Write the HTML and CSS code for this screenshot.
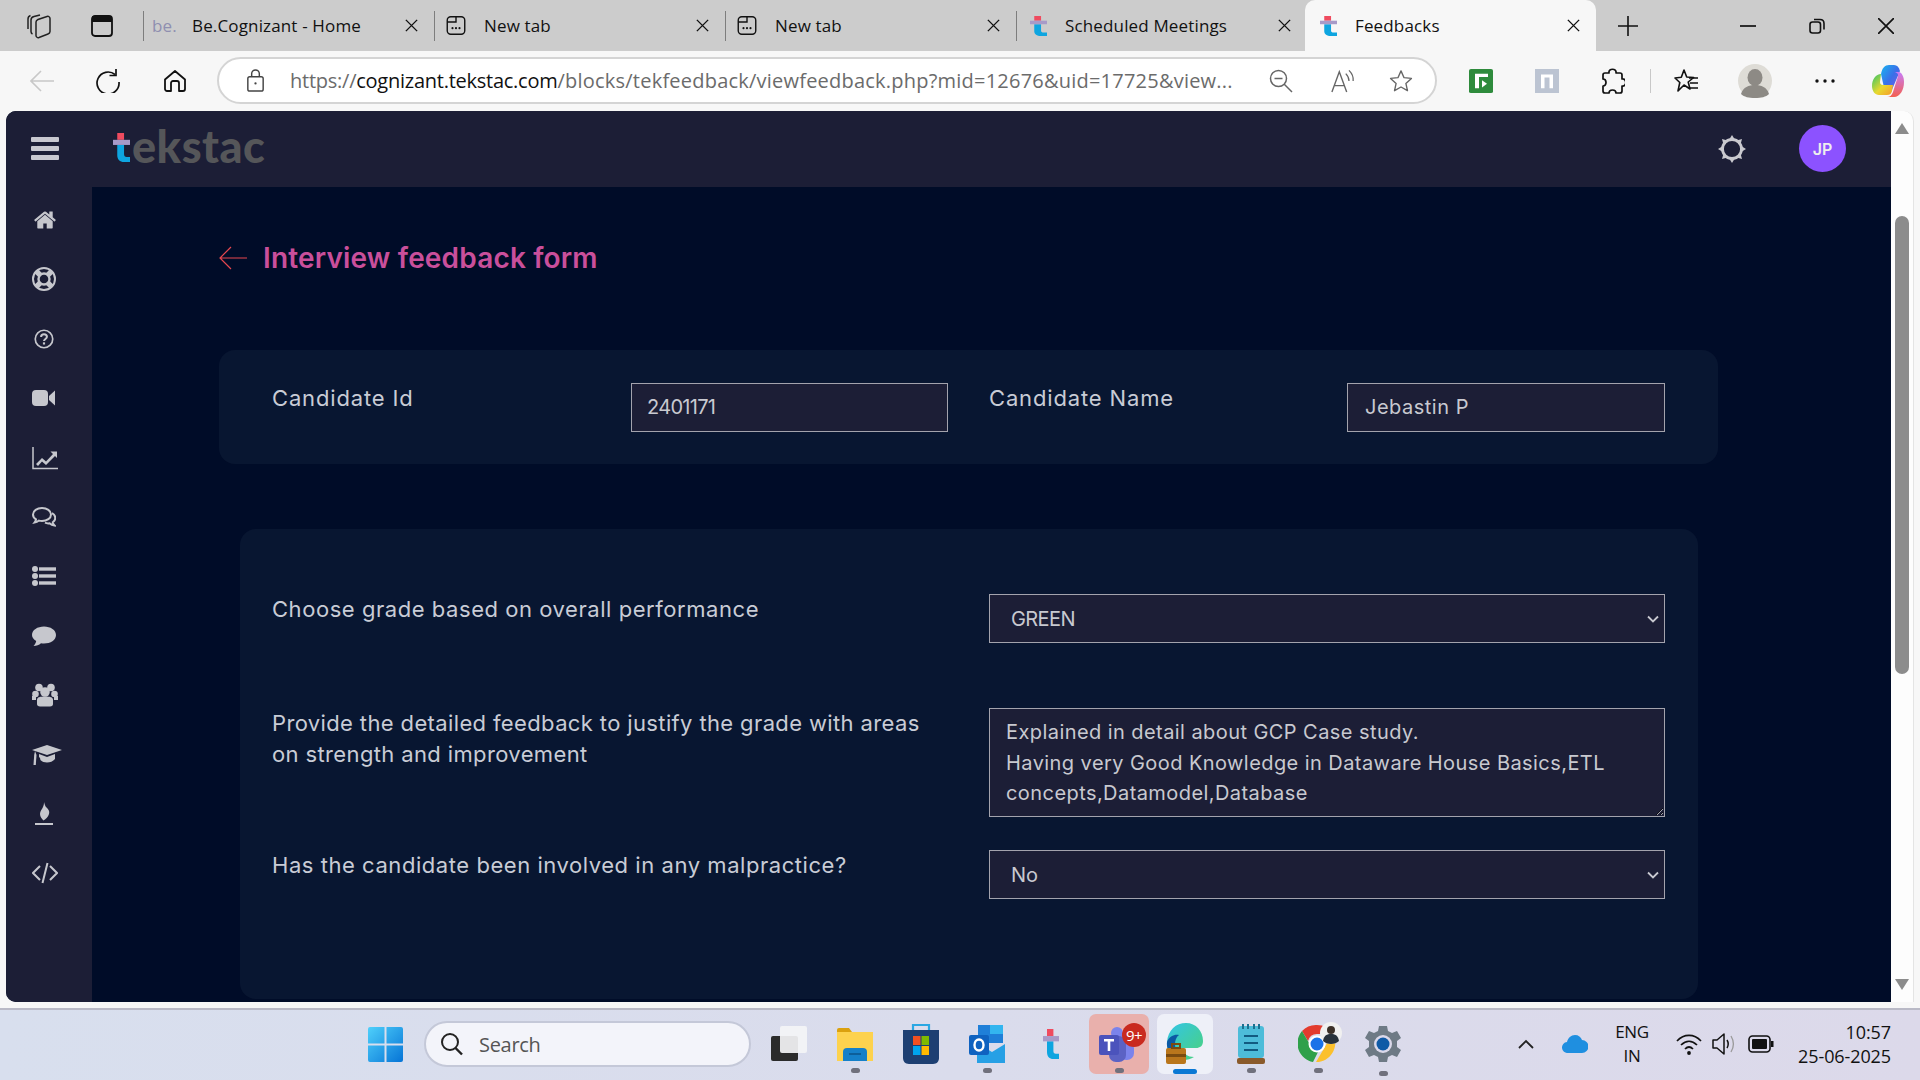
FILE: index.html
```html
<!DOCTYPE html>
<html lang="en">
<head>
<meta charset="utf-8">
<title>Feedbacks</title>
<link rel="stylesheet" href="styles.css">
</head>
<body>
<svg class="defs" width="0" height="0" aria-hidden="true">
  <symbol id="t-mark" viewBox="0 0 20 34" preserveAspectRatio="none">
    <rect x="5" y="0" width="8" height="8" fill="#ef4b5f"/>
    <path d="M5 14h8v11c0 2 1 3 3 3h4v6h-7c-5 0-8-3-8-8z" fill="#0ea5e0"/>
    <rect x="0" y="8" width="20" height="6" fill="#a89ac8"/>
  </symbol>
  <symbol id="newtab" viewBox="0 0 24 24">
    <rect x="2" y="2" width="20" height="20" rx="4" fill="none" stroke="#111" stroke-width="1.6"/>
    <path d="M2 8h10V2" fill="none" stroke="#111" stroke-width="1.6"/>
    <circle cx="8" cy="15" r="1.2" fill="#111"/><circle cx="12" cy="15" r="1.2" fill="#111"/><circle cx="16" cy="15" r="1.2" fill="#111"/>
  </symbol>
  <symbol id="x" viewBox="0 0 16 16">
    <path d="M2 2l12 12M14 2L2 14" stroke="#111" stroke-width="1.5" fill="none"/>
  </symbol>
</svg>

<div class="tabstrip">
  <svg class="strip-ic collections" viewBox="0 0 26 26"><path d="M10 9c0-1 1-2 2-2.500l9-3c1.500-.5 3 .5 3 2v13c0 1-.5 2-2 2.500l-9 3.500c-1.500.5-3-.5-3-2z" fill="none" stroke="#222" stroke-width="1.500"/><path d="M6.500 21c-1-.5-1.500-1.500-1.500-2.500V7c0-2 1-3 3-3.500L14 2M2 16V6c0-2 1-3 2.500-3.500" fill="none" stroke="#222" stroke-width="1.500"/></svg>
  <svg class="strip-ic sidebar-ic" viewBox="0 0 24 24"><rect x="2" y="2" width="20" height="20" rx="3" fill="none" stroke="#111" stroke-width="1.8"/><path d="M2 2h20v6H2z" fill="#111"/></svg>
  <div class="tab first"><span class="be">be.</span><span class="tab-title">Be.Cognizant - Home</span><svg class="tab-x"><use href="#x"/></svg></div>
  <div class="tab"><svg class="fav"><use href="#newtab"/></svg><span class="tab-title">New tab</span><svg class="tab-x"><use href="#x"/></svg></div>
  <div class="tab"><svg class="fav"><use href="#newtab"/></svg><span class="tab-title">New tab</span><svg class="tab-x"><use href="#x"/></svg></div>
  <div class="tab"><svg class="fav tek-fav"><use href="#t-mark"/></svg><span class="tab-title">Scheduled Meetings</span><svg class="tab-x"><use href="#x"/></svg></div>
  <div class="tab active"><svg class="fav tek-fav"><use href="#t-mark"/></svg><span class="tab-title">Feedbacks</span><svg class="tab-x"><use href="#x"/></svg></div>
  <svg class="plus" viewBox="0 0 20 20"><path d="M10 0v20M0 10h20" stroke="#111" stroke-width="1.6"/></svg>
  <svg class="win min" viewBox="0 0 16 16"><path d="M0 8h16" stroke="#111" stroke-width="1.7"/></svg>
  <svg class="win restore" viewBox="0 0 16 16"><rect x="1" y="4" width="10.5" height="11" rx="2.5" fill="none" stroke="#111" stroke-width="1.6"/><path d="M5 1.5h6c2.500 0 4 1.500 4 4v6" fill="none" stroke="#111" stroke-width="1.6"/></svg>
  <svg class="win close" viewBox="0 0 16 16"><path d="M0 0l16 16M16 0L0 16" stroke="#111" stroke-width="1.7"/></svg>
</div>

<div class="toolbar">
  <svg class="tool back" viewBox="0 0 24 24"><path d="M24 12H1M11 2L1 12l10 10" fill="none" stroke="#c8c8c8" stroke-width="1.6"/></svg>
  <svg class="tool reload" viewBox="0 0 24 24"><path d="M19 5.500A11 11 0 1 0 23 13" fill="none" stroke="#111" stroke-width="1.7"/><path d="M20 0v6.500h-6.500" fill="none" stroke="#111" stroke-width="1.7"/></svg>
  <svg class="tool home" viewBox="0 0 24 24"><path d="M2 10.500L12 2l10 8.500V20a2 2 0 0 1-2 2h-4v-8a2 2 0 0 0-2-2h-4a2 2 0 0 0-2 2v8H4a2 2 0 0 1-2-2z" fill="none" stroke="#111" stroke-width="1.8" stroke-linejoin="round"/></svg>
  <div class="addressbar">
    <svg class="lock" viewBox="0 0 18 24"><rect x="1" y="8" width="16" height="15" rx="2" fill="none" stroke="#444" stroke-width="1.5"/><path d="M5 8V5a4 4 0 0 1 8 0v3" fill="none" stroke="#444" stroke-width="1.5"/><circle cx="9" cy="15" r="1.200" fill="#444"/></svg>
    <span class="url"><span class="url-dim">https://</span><span class="url-host">cognizant.tekstac.com</span><span class="url-dim url-path">/blocks/tekfeedback/viewfeedback.php?mid=12676&amp;uid=17725&amp;view...</span></span>
    <svg class="addr-ic zoomout" viewBox="0 0 24 24"><circle cx="9.500" cy="9.500" r="8" fill="none" stroke="#666" stroke-width="1.500"/><path d="M15 15l8 8M5.500 9.500h8" stroke="#666" stroke-width="1.500"/></svg>
    <svg class="addr-ic read" viewBox="0 0 26 26"><path d="M1 25L9 3l8 22M4 18h10" fill="none" stroke="#666" stroke-width="1.500"/><path d="M16 5c2 2 3.500 4.500 3.500 8M19.500 1.500c3 3 5 7 4.500 11.500" fill="none" stroke="#666" stroke-width="1.400"/></svg>
    <svg class="addr-ic star" viewBox="0 0 26 26"><path d="M13 2l3.300 7.400 8 .8-6 5.400 1.700 7.900L13 19.500l-7 4 1.700-7.900-6-5.400 8-.8z" fill="none" stroke="#666" stroke-width="1.500" stroke-linejoin="round"/></svg>
  </div>
  <svg class="ext green" viewBox="0 0 24 30" preserveAspectRatio="none"><rect width="24" height="30" rx="2" fill="#2e8b3c"/><path d="M6 24V6h13v4h-9v14z" fill="#fff"/><path d="M13 14l5 4.500-5 4.500z" fill="#fff"/></svg>
  <svg class="ext nion" viewBox="0 0 24 30" preserveAspectRatio="none"><rect width="24" height="30" fill="#bcc4d2"/><path d="M6 24V7h12v17h-3.500V10.500h-5V24z" fill="#fff"/></svg>
  <svg class="ext puzzle" viewBox="0 0 24 28"><path d="M8 6c-1-5 8-5 7 0h4c1 0 2 1 2 2v4c5-1 5 8 0 7v5c0 1-1 2-2 2h-4c0-4-7-4-7 0H4c-1 0-2-1-2-2v-5c4 0 4-7 0-7V8c0-1 1-2 2-2z" fill="none" stroke="#111" stroke-width="1.700" stroke-linejoin="round"/></svg>
  <span class="tool-sep"></span>
  <svg class="ext favs" viewBox="0 0 24 28"><path d="M10 3l2.700 7 7 .5-5.500 4.500 1.800 7-6-4-6 6 1.800-8.500L1 11l6.300-.7z" fill="none" stroke="#111" stroke-width="1.600" stroke-linejoin="round"/><path d="M15 11h9M16 16h8M15 21h9" stroke="#111" stroke-width="1.600"/></svg>
  <svg class="avatar-ic" viewBox="0 0 34 34"><circle cx="17" cy="17" r="17" fill="#dedcd6"/><ellipse cx="17" cy="13.500" rx="7.500" ry="8.500" fill="#8d8a85"/><path d="M3 30c2-7 8-9 14-9s12 2 14 9c-3 3-8 4-14 4s-11-1-14-4z" fill="#8d8a85"/></svg>
  <svg class="dots" viewBox="0 0 20 4"><circle cx="2" cy="2" r="1.700" fill="#111"/><circle cx="10" cy="2" r="1.700" fill="#111"/><circle cx="18" cy="2" r="1.700" fill="#111"/></svg>
  <svg class="copilot" viewBox="0 0 34 34">
    <defs>
      <linearGradient id="cpa" x1="0" y1="0" x2="1" y2="1"><stop offset="0" stop-color="#19b4f0"/><stop offset=".5" stop-color="#3a6fe8"/><stop offset="1" stop-color="#7f5ce8"/></linearGradient>
      <linearGradient id="cpb" x1="0" y1="0" x2="1" y2="1"><stop offset="0" stop-color="#2fc36a"/><stop offset=".55" stop-color="#e8d92f"/><stop offset="1" stop-color="#f59a2b"/></linearGradient>
      <linearGradient id="cpc" x1="0" y1="0" x2="0" y2="1"><stop offset="0" stop-color="#c77dfa"/><stop offset="1" stop-color="#f4604f"/></linearGradient>
    </defs>
    <path d="M10 10c1-6 4-9 8-9h5c3 0 5 2 6 6l-9 21H14z" fill="url(#cpa)"/>
    <path d="M10 10c-5 0-9 5-9 12 0 5 3 9 7 9h8c3 0 4-1 5-4l1-6H12c-2 0-3-1-3-3z" fill="url(#cpb)"/>
    <path d="M22 8h5c4 0 6 5 6 10 0 8-4 15-10 15h-7c3 0 5-2 6-5l5-16c.5-2-1-4-5-4z" fill="url(#cpc)"/>
  </svg>
</div>

<div class="window">
  <div class="app">
    <header class="app-header">
      <div class="burger"><span></span><span></span><span></span></div>
      <div class="logo"><svg class="logo-t"><use href="#t-mark"/></svg><span class="logo-text">ekstac</span></div>
      <svg class="gear" viewBox="0 0 28 28"><circle cx="14" cy="14" r="9.500" fill="none" stroke="#c9c9cf" stroke-width="2.800"/><path d="M14 0l2.500 4h-5zM14 28l-2.500-4h5zM0 14l4-2.500v5zM28 14l-4 2.500v-5zM4 4l4.600 1.200-3.400 3.400zM24 24l-4.600-1.200 3.400-3.400zM24 4l-1.200 4.600-3.400-3.400zM4 24l1.200-4.600 3.400 3.400z" fill="#c9c9cf"/></svg>
      <div class="user">JP</div>
    </header>
    <div class="app-body">
      <nav class="rail">
        <svg class="rail-ic home-ic" viewBox="0 0 1792 1792"><path d="M1472 992v480q0 26-19 45t-45 19h-384v-384h-256v384h-384q-26 0-45-19t-19-45v-480q0-1 .5-3t.5-3l575-474 575 474q1 2 1 6zm223-69l-62 74q-8 9-21 11h-3q-13 0-21-7l-692-577-692 577q-12 8-24 7-13-2-21-11l-62-74q-8-10-7-23.500t11-22.500l719-599q32-26 76-26t76 26l244 204v-195q0-14 9-23t23-9h192q14 0 23 9t9 23v408l219 182q10 8 11 21.500t-7 23.500z"/></svg>
        <svg class="rail-ic" viewBox="0 0 24 24"><circle cx="12" cy="12" r="11" fill="none" stroke-width="2"/><circle cx="12" cy="12" r="5.500" fill="none" stroke-width="2.400"/><path d="M4.200 4.200l4 4M19.800 4.200l-4 4M4.200 19.800l4-4M19.800 19.800l-4-4" fill="none" stroke-width="5.400"/></svg>
        <svg class="rail-ic small" viewBox="0 0 24 24"><circle cx="12" cy="12" r="10.500" fill="none" stroke-width="2"/><path d="M8.500 9.500c0-2 1.500-3.300 3.500-3.300s3.500 1.300 3.500 3c0 2.600-3.500 2.800-3.500 5.300" fill="none" stroke-width="2.400"/><rect x="10.700" y="16" width="2.600" height="2.600" stroke="none"/></svg>
        <svg class="rail-ic" viewBox="0 0 24 24"><rect x="0" y="4" width="16" height="16" rx="4" stroke="none"/><path d="M17 10l6-5.500v15L17 14z" stroke="none"/></svg>
        <svg class="rail-ic wide" viewBox="0 0 26 24"><path d="M1 1v21.500h25" fill="none" stroke-width="1.500"/><path d="M4 18l6-6 4 3.500L21 8l-2.500-2.500H25V12l-2-2-9 9-4-3.500L6 20z" stroke="none"/></svg>
        <svg class="rail-ic" viewBox="0 0 24 24"><path d="M10 3c5 0 9 2.700 9 6.500S15 16 10 16c-1 0-2-.1-3-.4-1.200 1-2.800 1.800-4.500 2 .8-1 1.400-2 1.500-3.200C2 13.200 1 11.500 1 9.500 1 5.700 5 3 10 3z" fill="none" stroke-width="2"/><path d="M20 8c2 1.200 3.300 3 3.300 5 0 1.700-1 3.200-2.500 4.300.1 1.200.8 2.300 1.700 3.200-2-.2-3.700-1-5-2.200-1.500.2-3.300 0-4.500-.6" fill="none" stroke-width="2"/></svg>
        <svg class="rail-ic" viewBox="0 0 24 24"><circle cx="3" cy="5" r="3" stroke="none"/><circle cx="3" cy="12" r="3" stroke="none"/><circle cx="3" cy="19" r="3" stroke="none"/><rect x="7" y="3.300" width="17" height="3.400" stroke="none"/><rect x="7" y="10.300" width="17" height="3.400" stroke="none"/><rect x="7" y="17.300" width="17" height="3.400" stroke="none"/></svg>
        <svg class="rail-ic" viewBox="0 0 24 24"><path d="M12 2.500c6.500 0 12 3.500 12 8.500s-5.500 8.500-12 8.500c-1 0-2-.1-3-.3C7 21 4.500 22 1.500 22c1.300-1.300 2.300-3 2.700-5C1.600 15.500 0 13.400 0 11 0 6 5.500 2.500 12 2.500z" stroke="none"/></svg>
        <svg class="rail-ic wide" viewBox="0 0 26 24"><circle cx="7" cy="4.500" r="3.800" stroke="none"/><circle cx="19" cy="4.500" r="3.800" stroke="none"/><circle cx="3.500" cy="11" r="3.300" stroke="none"/><circle cx="22.500" cy="11" r="3.300" stroke="none"/><circle cx="13" cy="9" r="4.800" stroke="none"/><path d="M5 17c0-3 3-3.500 8-3.500s8 .5 8 3.500v4c0 1.500-1 2.500-3 2.500H8c-2 0-3-1-3-2.500z" stroke="none"/><path d="M0 13h4v4H0zM22 13h4v4h-4z" stroke="none"/></svg>
        <svg class="rail-ic grad" viewBox="0 0 30 20"><path d="M15 0l15 5-15 5L0 5z" stroke="none"/><path d="M7 9l8 3 8-3v5c-2 2.500-5 3.500-8 3.500-2.500 0-5-1-6-2l-.6-.4c0-1.500-.5-2.500-1.400-3z" stroke="none"/><path d="M3 6l1.500 4-.7 10H1.500l.7-10z" stroke="none"/></svg>
        <svg class="rail-ic flame" viewBox="0 0 20 24"><path d="M10 0c1 3 1 4 2.500 5.500C14 7 16 9 15 12c-.8 3-3 5-5.500 6.500C8 17 6 15 6 12c0-3 2-4.500 3-7C9.700 3.500 10 2 10 0z" stroke="none"/><rect x="1" y="21" width="18" height="2" stroke="none"/></svg>
        <svg class="rail-ic wide" viewBox="0 0 26 20"><path d="M8 3L1 10l7 7M18 3l7 7-7 7M15.500 0l-5 20" fill="none" stroke-width="2"/></svg>
      </nav>
      <main class="content">
        <div class="title-row">
          <svg class="title-arrow" viewBox="0 0 28 24"><path d="M28 12H1M12 1L1 12l11 11" fill="none" stroke="#e5474f" stroke-width="1.200"/></svg>
          <h1 class="title">Interview feedback form</h1>
        </div>
        <section class="card candidate">
          <label class="field-label wider">Candidate Id</label>
          <input class="control id-val" type="text" value="2401171">
          <span></span>
          <label class="field-label wider">Candidate Name</label>
          <input class="control name-val" type="text" value="Jebastin P">
        </section>
        <section class="card questions">
          <label class="field-label">Choose grade based on overall performance</label>
          <select class="control pick grade"><option>GREEN</option></select>
          <label class="field-label row-two tighter">Provide the detailed feedback to justify the grade with areas on strength and improvement</label>
          <textarea class="control notes row-two">Explained in detail about GCP Case study.
Having very Good Knowledge in Dataware House Basics,ETL concepts,Datamodel,Database</textarea>
          <label class="field-label row-three">Has the candidate been involved in any malpractice?</label>
          <select class="control pick row-three"><option>No</option></select>
        </section>
      </main>
    </div>
  </div>
  <div class="scrollbar"><span class="arrow up"></span><span class="track"><span class="thumb"></span></span><span class="arrow down"></span></div>
</div>

<footer class="taskbar">
  <svg class="tb winlogo" viewBox="0 0 35 35"><defs><linearGradient id="wl" x1="0" y1="0" x2="1" y2="1"><stop offset="0" stop-color="#4fd0fb"/><stop offset="1" stop-color="#0674d6"/></linearGradient></defs><path d="M0 2a2 2 0 0 1 2-2h14.500v16.500H0zM18.500 0H33a2 2 0 0 1 2 2v14.500H18.500zM0 18.500h16.500V35H2a2 2 0 0 1-2-2zM18.500 18.500H35V33a2 2 0 0 1-2 2H18.500z" fill="url(#wl)"/></svg>
  <div class="searchbox">
    <svg class="search-ic" viewBox="0 0 24 24"><circle cx="10" cy="10" r="8" fill="none" stroke="#222" stroke-width="2"/><path d="M15.500 16l6.500 6.500" stroke="#222" stroke-width="2.400"/></svg>
    <span class="search-text">Search</span>
  </div>
  <svg class="tb taskview" viewBox="0 0 36 36"><rect x="0" y="10" width="27" height="25" rx="2" fill="#2b2b2b"/><rect x="9" y="0" width="27" height="27" rx="2" fill="#f4f4f6" opacity=".92"/></svg>
  <div class="tb-slot explorer">
    <svg viewBox="0 0 36 33"><path d="M0 2a2 2 0 0 1 2-2h10l3 4H0z" fill="#dba10e"/><rect y="4" width="36" height="29" fill="#fdd24e"/><path d="M6 33v-9a4 4 0 0 1 4-4h16a4 4 0 0 1 4 4v9z" fill="#1580c9"/><rect x="12" y="25" width="12" height="2" fill="#0d5f9a"/></svg>
    <span class="run"></span>
  </div>
  <svg class="tb store" viewBox="0 0 36 40"><path d="M10 6V1h16v5" fill="none" stroke="#2aa7e3" stroke-width="2.200"/><path d="M0 6h36v28c0 3-2 6-6 6H6c-4 0-6-3-6-6z" fill="#1d3f72"/><rect x="10" y="12" width="7.500" height="9" fill="#f25022"/><rect x="18.500" y="12" width="7.500" height="9" fill="#7fba00"/><rect x="10" y="22" width="7.500" height="9" fill="#00a4ef"/><rect x="18.500" y="22" width="7.500" height="9" fill="#ffb900"/></svg>
  <div class="tb-slot outlook">
    <svg viewBox="0 0 36 42"><path d="M9 2h25v18H9z" fill="#1f7fd8"/><path d="M21 2h13v9H21z" fill="#33b5ef"/><path d="M8 20l15 9 13-8v19H8z" fill="#27a0e5"/><rect x="0" y="12" width="20" height="20" rx="2" fill="#0f62c0"/><ellipse cx="10" cy="22" rx="4.500" ry="5.500" fill="none" stroke="#fff" stroke-width="2.400"/></svg>
    <span class="run"></span>
  </div>
  <svg class="tb tek"><use href="#t-mark"/></svg>
  <div class="tile teams">
    <svg class="teams-ic" viewBox="0 0 36 36"><circle cx="28" cy="12" r="5" fill="#7b83eb"/><rect x="20" y="15" width="15" height="19" rx="7" fill="#7b83eb"/><circle cx="18" cy="7" r="6" fill="#7b83eb"/><rect x="10" y="10" width="17" height="26" rx="7" fill="#5b62c4"/><rect x="0" y="9" width="20" height="20" rx="2" fill="#4b53bc"/><path d="M5 13h10v2.500h-3.700V25H8.700v-9.500H5z" fill="#fff"/></svg>
    <span class="badge">9+</span>
    <span class="run red"></span>
  </div>
  <div class="tile edge">
    <svg class="edge-ic" viewBox="0 0 38 44"><defs><linearGradient id="eg" x1="0" y1="0" x2="1" y2="1"><stop offset="0" stop-color="#32c5e8"/><stop offset="1" stop-color="#4bd27a"/></linearGradient></defs><path d="M1 20C2 8 10 1 20 1c10 0 17 8 17 18 0 5-3 7-7 7H17c0 6 5 9 11 9-3 2-7 3-10 3C8 38 0 30 1 20z" fill="url(#eg)"/><path d="M1 20c2-6 8-8 12-7-3 2-4 6-4 9 0 7 4 12 9 16C8 38 0 30 1 20z" fill="#0c59a4"/><rect x="0" y="26" width="20" height="16" rx="2" fill="#b9761c"/><rect x="0" y="32" width="20" height="3" fill="#7a4b10"/><rect x="6" y="22" width="8" height="4" fill="none" stroke="#7a4b10" stroke-width="2"/></svg>
    <span class="run blue"></span>
  </div>
  <div class="tb-slot notepad">
    <svg viewBox="0 0 28 40"><rect x="1" y="2" width="26" height="32" rx="3" fill="#4dbcd9"/><rect y="34" width="28" height="6" rx="2" fill="#8a5a2b"/><path d="M6 0v5M11 0v5M17 0v5M22 0v5" stroke="#1b6f8f" stroke-width="2"/><path d="M7 12h14M7 19h14M7 26h14" stroke="#125a80" stroke-width="2.200"/></svg>
    <span class="run"></span>
  </div>
  <div class="tb-slot chrome">
    <svg viewBox="0 0 44 46"><path d="M19 4a19 19 0 0 1 16 9H19a9.500 9.500 0 0 0-9 7L4 10a19 19 0 0 1 15-6z" fill="#e33b2e"/><path d="M4 10l10 17a9.500 9.500 0 0 0 6 4l-5 10A19 19 0 0 1 4 10z" fill="#2fa04a"/><path d="M35 13a19 19 0 0 1-17 28l10-17a9.500 9.500 0 0 0 0-11z" fill="#fbc02d"/><circle cx="19" cy="23" r="7.500" fill="#1a73e8" stroke="#fff" stroke-width="2"/><circle cx="33" cy="12" r="11" fill="#f0f0f0"/><circle cx="33" cy="9" r="4" fill="#3b3028"/><path d="M25 20c1-6 4-7 8-7s7 1 8 7c-2 2-5 3-8 3s-6-1-8-3z" fill="#28323c"/></svg>
    <span class="run"></span>
  </div>
  <div class="tb-slot settings">
    <svg viewBox="0 0 36 36"><path d="M14 0h8l1 5 4 2 5-2 4 7-4 3v6l4 3-4 7-5-2-4 2-1 5h-8l-1-5-4-2-5 2-4-7 4-3v-6L0 12l4-7 5 2 4-2z" fill="#6e7a85"/><circle cx="18" cy="18" r="9" fill="#dbd9ea"/><circle cx="18" cy="18" r="6.500" fill="#0f5aa6"/></svg>
    <span class="run"></span>
  </div>
  <svg class="tray chev" viewBox="0 0 16 10"><path d="M1 9l7-7 7 7" fill="none" stroke="#222" stroke-width="1.800"/></svg>
  <svg class="tray cloud" viewBox="0 0 26 18"><path d="M6 18a5.500 5.500 0 0 1-1-11C6 3 9 0 13 0c3.500 0 6 2 7 5a6.500 6.500 0 0 1 0 13z" fill="#1f8fe0"/></svg>
  <div class="lang"><span>ENG</span><span>IN</span></div>
  <svg class="tray wifi" viewBox="0 0 26 24"><path d="M1 9c7-7.500 17-7.500 24 0M5 13c5-5 11-5 16 0M9 17c2.500-2.500 5.500-2.500 8 0" fill="none" stroke="#111" stroke-width="1.700"/><circle cx="13" cy="21" r="1.900" fill="#111"/></svg>
  <svg class="tray vol" viewBox="0 0 24 24"><path d="M1 8h4l7-6v20l-7-6H1z" fill="none" stroke="#111" stroke-width="1.500" stroke-linejoin="round"/><path d="M15 8c1.500 2.500 1.500 5.500 0 8" fill="none" stroke="#111" stroke-width="1.500"/><path d="M19 4c3 5 3 11 0 16" fill="none" stroke="#999" stroke-width="1.300"/></svg>
  <svg class="tray batt" viewBox="0 0 26 20"><rect x="1" y="2" width="21" height="16" rx="3.500" fill="none" stroke="#111" stroke-width="1.600"/><rect x="4" y="5" width="15" height="10" rx="1" fill="#111"/><rect x="23" y="7" width="2.500" height="6" fill="#111"/></svg>
  <div class="clock"><span>10:57</span><span>25-06-2025</span></div>
</footer>
</body>
</html>
```

FILE: styles.css
```css
* { box-sizing: border-box; }
html, body { margin: 0; height: 100%; }
body {
  width: 1920px; height: 1080px; overflow: hidden;
  display: flex; flex-direction: column;
  background: #f7f7f7;
  font-family: "Open Sans", "Noto Sans", sans-serif;
  color: #111;
}
.defs { position: absolute; }

/* tab strip */
.tabstrip { height: 51px; flex: none; background: #cccccc; display: flex; align-items: center; }
.strip-ic { flex: none; width: 24px; height: 26px; }
.collections { margin-left: 26px; width: 26px; }
.sidebar-ic { margin-left: 38px; }
.tab {
  flex: none; width: 291px; height: 51px;
  display: flex; align-items: center;
  padding-left: 11px; position: relative;
  font-size: 17px; letter-spacing: .15px;
}
.tab::before { content: ""; position: absolute; left: 0; top: 11px; height: 30px; width: 1px; background: #7d7d7d; }
.tab.first { margin-left: 29px; padding-left: 9px; }
.tab.active { background: #f7f7f7; border-radius: 10px 10px 0 0; margin-left: -2px; padding-left: 12px; }
.tab.active::before { display: none; }
.be { color: #8f8fb0; width: 40px; flex: none; font-size: 17px; }
.fav { width: 22px; height: 21px; flex: none; margin-right: 17px; }
.tek-fav { width: 17px; height: 20px; margin: 0 18px 0 3px; }
.tab-title { flex: 1; white-space: nowrap; }
.tab-x { width: 15px; height: 15px; flex: none; margin-right: 15px; }
.plus { flex: none; width: 20px; height: 20px; margin-left: 22px; }
.win { flex: none; width: 16px; height: 16px; }
.min { margin-left: 102px; }
.restore { margin-left: 53px; }
.close { margin-left: 53px; }

/* address toolbar */
.toolbar { height: 60px; flex: none; display: flex; align-items: center; padding-bottom: 1px; }
.tool { flex: none; width: 24px; height: 24px; }
.back { margin-left: 30px; }
.reload { margin-left: 42px; }
.home { margin-left: 43px; }
.addressbar {
  flex: none; width: 1220px; height: 47px; margin-left: 30px;
  border: 2px solid #d4d4d4; border-radius: 24px; background: #fff;
  display: flex; align-items: center; padding-left: 27px;
}
.lock { flex: none; width: 19px; height: 23px; }
.url { flex: none; width: 944px; margin-left: 25px; font-size: 20px; letter-spacing: -.25px; white-space: nowrap; overflow: hidden; }
.url-dim { color: #6b6b6b; }
.url-path { letter-spacing: .22px; }
.url-host { color: #111; }
.addr-ic { flex: none; width: 24px; height: 24px; }
.zoomout { margin-left: 35px; }
.read { margin-left: 38px; }
.star { margin-left: 34px; }
.ext { flex: none; width: 24px; height: 24px; }
.green { margin-left: 32px; }
.nion { margin-left: 42px; }
.puzzle { margin-left: 42px; height: 28px; }
.tool-sep { flex: none; width: 1px; height: 24px; background: #c8c8c8; margin-left: 25px; }
.favs { margin-left: 23px; height: 28px; }
.avatar-ic { flex: none; width: 34px; height: 34px; margin-left: 40px; }
.dots { flex: none; width: 20px; height: 4px; margin-left: 43px; }
.copilot { flex: none; width: 34px; height: 34px; margin-left: 36px; }

/* app window */
.window { flex: none; height: 897px; padding: 0 6px 6px; display: flex; }
.app { flex: none; width: 1885px; display: flex; flex-direction: column; background: #000c28; border-radius: 10px 0 0 10px; overflow: hidden; }
.app-header { height: 76px; flex: none; background: #1c1e36; display: flex; align-items: center; padding-bottom: 1px; }
.burger { flex: none; width: 28px; margin-left: 25px; display: flex; flex-direction: column; gap: 4px; }
.burger span { height: 5px; background: #c8c8d0; border-radius: 1px; }
.logo { flex: none; margin: 0 0 5px 54px; display: flex; align-items: flex-end; height: 36px; }
.logo-t { width: 17px; height: 29px; flex: none; margin-bottom: 2px; }
.logo-text { font-family: "Lato", sans-serif; font-weight: 900; font-size: 45px; line-height: 36px; color: #555659; letter-spacing: .5px; margin-left: 2px; }
.gear { flex: none; width: 28px; height: 28px; margin-left: auto; }
.user {
  flex: none; width: 47px; height: 47px; margin: 0 45px 0 53px;
  background: #8c52ff; color: #eee; border-radius: 50%;
  display: flex; align-items: center; justify-content: center;
  font-family: "Inter", sans-serif; font-size: 16px; font-weight: 600;
}
.app-body { flex: 1; min-height: 0; display: flex; }
.rail { flex: none; width: 86px; background: #1c1e36; display: flex; flex-direction: column; align-items: flex-start; padding: 21px 0 0 26px; }
.rail-ic { flex: none; width: 24px; height: 24px; margin-bottom: 35.4px; fill: #c6c7cd; stroke: #c6c7cd; }
.rail-ic.home-ic { margin-left: 1px; }
.rail-ic.small { width: 20px; margin-left: 2px; }
.rail-ic.flame { width: 20px; margin-left: 2px; }
.rail-ic.wide { width: 26px; }
.rail-ic.grad { width: 30px; }

.content { flex: 1; min-width: 0; padding: 0 0 0 127px; color: #c8ccd6; font-family: "Inter", "Lato", sans-serif; overflow: hidden; }
.title-row { display: flex; align-items: center; height: 46px; margin-top: 48px; }
.title-arrow { flex: none; width: 28px; height: 24px; margin-right: 16px; }
.title { margin: 0; font-size: 28px; font-weight: 600; color: #c94f9b; white-space: nowrap; letter-spacing: .17px; }
.card { background: #081631; border-radius: 16px; display: grid; }
.candidate {
  width: 1499px; height: 114px; margin-top: 69px; padding: 33px 53px 32px 53px;
  grid-template-columns: 359px 317px 41px 358px 318px;
}
.questions {
  width: 1458px; margin: 65px 0 0 21px; padding: 65px 33px 100px 32px;
  grid-template-columns: 717px 676px;
}
.row-two { margin-top: 65px; }
.row-three { margin-top: 33px; }
.field-label { font-size: 22px; line-height: 31px; letter-spacing: .55px; padding-right: 50px; }
.field-label.wider { letter-spacing: .85px; }
.field-label.tighter { letter-spacing: .37px; }
.control {
  width: 100%; height: 49px;
  background: #1c1e36; border: 1px solid #a3a3ad; border-radius: 0;
  color: #c8c9d0; font-family: "Inter", "Lato", sans-serif; font-size: 20px;
  padding: 0 15px 2px; outline: none;
}
.id-val { letter-spacing: -.7px; }
.name-val { letter-spacing: .5px; padding-left: 17px; }
.pick {
  padding: 0 21px; appearance: none;
  background-image: url("data:image/svg+xml,%3Csvg xmlns='http://www.w3.org/2000/svg' width='12' height='8'%3E%3Cpath d='M1 1.500l5 5 5-5' fill='none' stroke='%23c8c9d0' stroke-width='1.800'/%3E%3C/svg%3E");
  background-repeat: no-repeat; background-position: right 5px center;
}
.grade { letter-spacing: -.6px; }
.notes.row-two { height: 109px; padding: 8px 16px; line-height: 30.5px; resize: vertical; display: block; letter-spacing: .43px; overflow: hidden; }

/* scrollbar */
.scrollbar { flex: none; width: 23px; background: #fdfdfd; border-radius: 0 10px 0 0; display: flex; flex-direction: column; align-items: center; padding: 12px 0 12px; border-right: 1px solid #e4e4e4; }
.arrow { flex: none; width: 0; height: 0; border-left: 7px solid transparent; border-right: 7px solid transparent; }
.arrow.up { border-bottom: 11px solid #8c8c8c; }
.arrow.down { border-top: 11px solid #8c8c8c; }
.track { flex: 1; width: 100%; padding-top: 82px; padding-bottom: 305px; display: flex; justify-content: center; }
.thumb { width: 14px; background: #8c8c8c; border-radius: 7px; }

/* taskbar */
.taskbar {
  flex: 1; display: flex; align-items: center; padding-bottom: 2px;
  background: linear-gradient(90deg, #d8dfee, #dcd9ea);
  border-top: 2px solid #b9b9c6;
}
.tb { flex: none; }
.winlogo { width: 35px; height: 35px; margin-left: 368px; }
.searchbox {
  flex: none; width: 327px; height: 46px; margin-left: 21px;
  background: #f3f4fa; border: 2px solid #c4c8d8; border-radius: 23px;
  display: flex; align-items: center; padding-left: 14px;
}
.search-ic { width: 24px; height: 24px; flex: none; }
.search-text { margin-left: 15px; font-size: 20px; color: #555; letter-spacing: -.3px; }
.taskview { width: 36px; height: 36px; margin-left: 20px; }
.tb-slot { flex: none; position: relative; display: flex; }
.tb-slot svg { width: 100%; height: 100%; }
.run { position: absolute; left: 50%; bottom: -12px; width: 9px; height: 5px; margin-left: -4px; border-radius: 3px; background: #70707c; }
.explorer { width: 36px; height: 33px; margin-left: 30px; }
.store { width: 36px; height: 40px; margin-left: 30px; }
.outlook { width: 36px; height: 42px; margin-left: 30px; }
.outlook .run { bottom: -8px; }
.tek { width: 16px; height: 30px; margin-left: 38px; }
.tile { flex: none; height: 60px; border-radius: 7px; position: relative; display: flex; align-items: center; justify-content: center; }
.teams { width: 60px; background: #e9b0ac; margin-left: 30px; }
.teams-ic { width: 36px; height: 36px; margin-left: -4px; }
.badge { position: absolute; right: 3px; top: 9px; width: 24px; height: 24px; border-radius: 50%; background: #c92a1f; color: #fff; font-size: 15px; line-height: 24px; text-align: center; letter-spacing: -.5px; }
.teams .run { bottom: 1px; }
.edge { width: 56px; background: #eef0f8; margin-left: 8px; }
.edge-ic { width: 38px; height: 44px; }
.edge .run { bottom: 0; width: 24px; margin-left: -12px; background: #0a78d4; }
.notepad { width: 28px; height: 40px; margin-left: 24px; }
.notepad .run { bottom: -9px; }
.chrome { width: 44px; height: 46px; margin-left: 33px; }
.chrome .run { bottom: -6px; margin-left: -6px; }
.settings { width: 36px; height: 36px; margin-left: 23px; }
.settings .run { bottom: -14px; }
.tray { flex: none; }
.chev { width: 16px; height: 10px; margin-left: 117px; }
.cloud { width: 26px; height: 18px; margin-left: 28px; }
.lang { flex: none; width: 50px; margin-left: 19px; display: flex; flex-direction: column; align-items: center; font-size: 17px; line-height: 24px; letter-spacing: -.3px; }
.wifi { width: 26px; height: 24px; margin-left: 19px; }
.vol { width: 24px; height: 24px; margin-left: 10px; }
.batt { width: 26px; height: 20px; margin-left: 12px; }
.clock { flex: none; margin-left: 23px; width: 94px; display: flex; flex-direction: column; align-items: flex-end; font-size: 18px; line-height: 24px; letter-spacing: -.1px; white-space: nowrap; }
```
